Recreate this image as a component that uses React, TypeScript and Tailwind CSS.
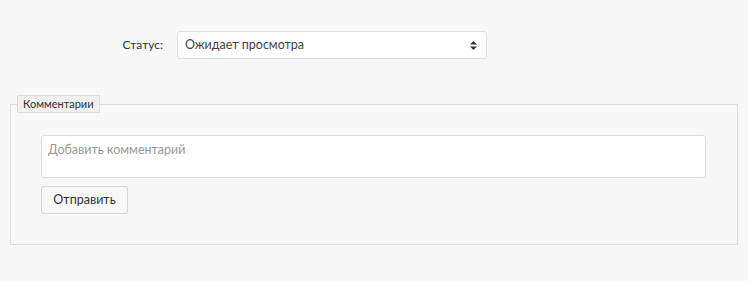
export default function App() {
  return (
    <div className="w-full h-[281px] bg-[#f7f7f7] pt-[31px] font-['Lato','Liberation_Sans',sans-serif] text-[#333]">
      <div className="flex items-center">
        <label className="w-[163px] text-right text-[12px] text-[#333]">Статус:</label>
        <div className="ml-[14px] w-[310px] h-[28px] bg-white border border-[#dedede] rounded-[3px] flex items-center justify-between pl-[7px] pr-[9px]">
          <span className="text-[12.5px] text-[#444]">Ожидает просмотра</span>
          <svg width="7" height="9" viewBox="0 0 7 9">
            <path d="M3.5 0 L7 3.5 H0 Z" fill="#333" />
            <path d="M3.5 9 L7 5.5 H0 Z" fill="#333" />
          </svg>
        </div>
      </div>
      <fieldset className="mt-[36px] ml-[10px] w-[728px] border border-[#dcdcdc] pl-[6px] pr-[31px] pb-[30px]">
        <legend className="h-[18px] px-[5px] border border-[#dcdcdc] bg-[#f0f0f0] text-[11px] leading-[16px] text-[#333]">
          Комментарии
        </legend>
        <div className="pl-[24px] pt-[22px] flex flex-col gap-[8px]">
          <textarea
            placeholder="Добавить комментарий"
            className="w-full h-[43px] resize-none bg-white border border-[#dcdcdc] rounded-[3px] px-[6px] py-[5px] text-[12.5px] placeholder:text-[#999] outline-none"
          />
          <div>
            <button className="w-[87px] h-[28px] border border-[#d4d4d4] rounded-[3px] bg-[#f7f7f7] text-[12.5px] text-[#333]">
              Отправить
            </button>
          </div>
        </div>
      </fieldset>
    </div>
  );
}
